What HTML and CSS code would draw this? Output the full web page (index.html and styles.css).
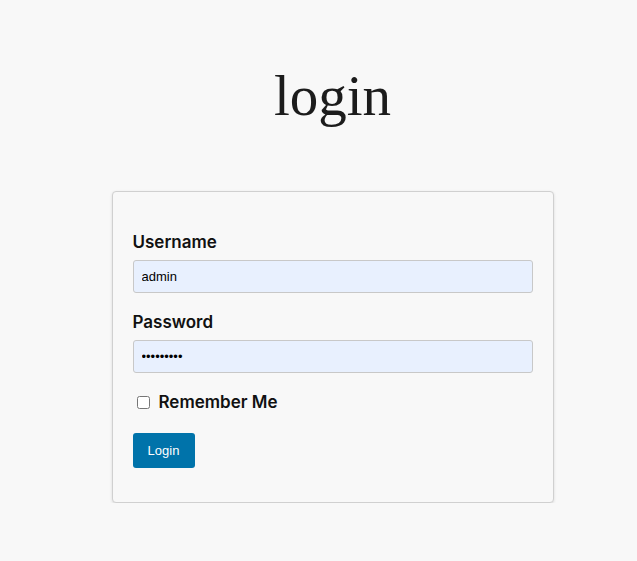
FILE: index.html
```html
<!DOCTYPE html>
<html>
<head>
<meta charset="utf-8">
<link rel="stylesheet" href="styles.css">
</head>
<body>
<div class="page">
  <h1 class="title">login</h1>
  <form class="card">
    <div class="field">
      <label class="label" for="u">Username</label>
      <input class="input" id="u" type="text" value="admin">
    </div>
    <div class="field">
      <label class="label" for="p">Password</label>
      <input class="input" id="p" type="password" value="123456789">
    </div>
    <div class="remember">
      <input class="check" type="checkbox" id="r">
      <label class="label remember-label" for="r">Remember Me</label>
    </div>
    <button class="btn" type="button">Login</button>
  </form>
</div>
</body>
</html>
```
FILE: styles.css
```css
html, body {
  margin: 0;
  background: #f8f8f8;
}
body {
  padding-left: 28px;
  font-family: Inter, "Liberation Sans", sans-serif;
  color: #1a1a1a;
}
.page {
  display: flex;
  flex-direction: column;
  align-items: center;
}
.title {
  font-family: "Liberation Serif", serif;
  font-weight: normal;
  font-size: 57px;
  line-height: 58px;
  margin: 67px 0 0;
  color: #1c1c1c;
}
.card {
  box-sizing: border-box;
  width: 442px;
  margin-top: 66px;
  padding: 40px 20px 34px;
  border: 1px solid #d0d0d0;
  border-radius: 4px;
  box-shadow: 0 1px 3px rgba(0,0,0,0.12);
  background: #f8f8f8;
}
.field {
  display: flex;
  flex-direction: column;
  margin-bottom: 19px;
}
.label {
  font-weight: 600;
  font-size: 17px;
  line-height: 20px;
  color: #111;
  margin-bottom: 8px;
}
.input {
  box-sizing: border-box;
  width: 400px;
  height: 33px;
  padding: 0 8px;
  border: 1px solid #c8c8c8;
  border-radius: 3px;
  background: #e8f0fe;
  font-family: "Liberation Sans", Arial, sans-serif;
  font-size: 13px;
  color: #000;
}
.remember {
  display: flex;
  align-items: center;
  margin-bottom: 21px;
}
.check {
  margin: 0 0 0 4px;
  width: 13px;
  height: 13px;
}
.remember-label {
  margin: 0 0 0 9px;
}
.btn {
  display: block;
  width: 62px;
  height: 35px;
  border: 0;
  border-radius: 3px;
  background: #0073aa;
  color: #fff;
  font-family: "Liberation Sans", Arial, sans-serif;
  font-size: 13px;
}
```
